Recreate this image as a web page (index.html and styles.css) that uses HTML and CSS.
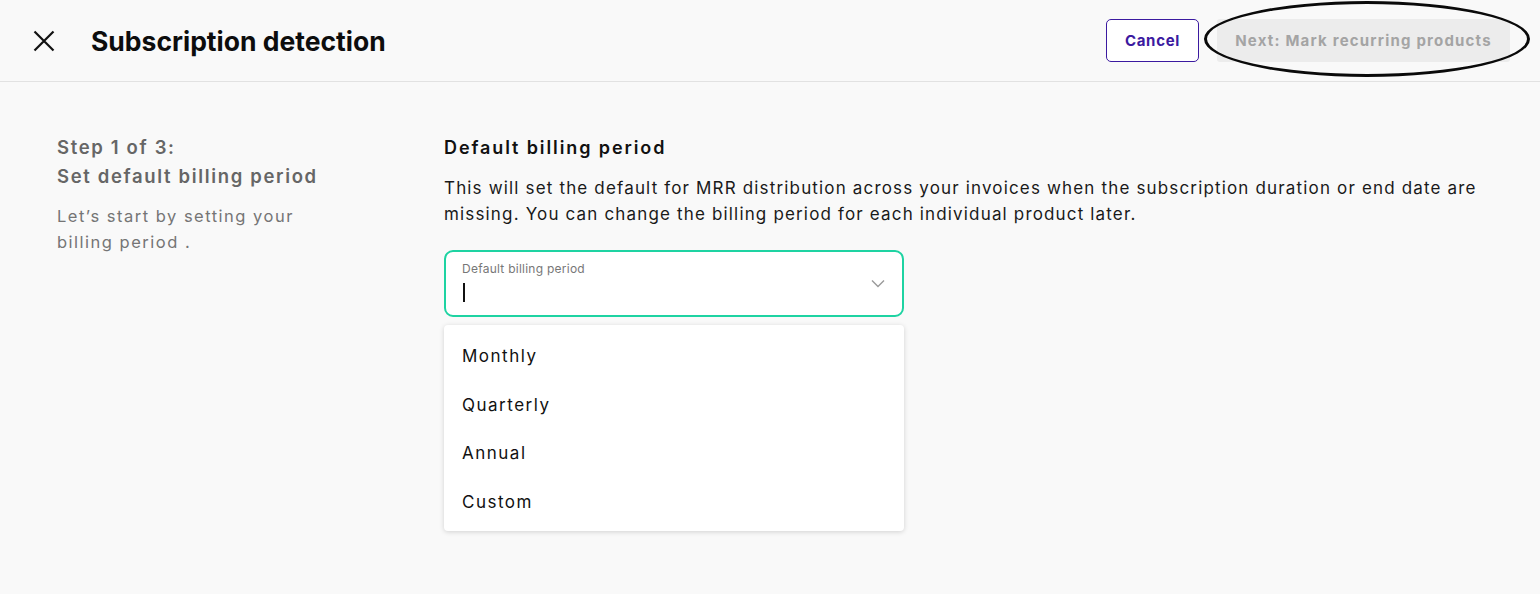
FILE: index.html
```html
<!DOCTYPE html>
<html lang="en">
<head>
<meta charset="utf-8">
<title>Subscription detection</title>
<link rel="stylesheet" href="styles.css">
</head>
<body>
<header class="topbar">
  <button class="close-btn" aria-label="Close">
    <svg width="22" height="22" viewBox="0 0 22 22"><path d="M1.5 1.5 L20.5 20.5 M20.5 1.5 L1.5 20.5" stroke="#111" stroke-width="2.2" fill="none"/></svg>
  </button>
  <h1 class="title">Subscription detection</h1>
  <div class="actions">
    <button class="btn btn-cancel">Cancel</button>
    <div class="next-wrap">
      <button class="btn btn-next" disabled>Next: Mark recurring products</button>
      <span class="annot-ellipse"></span>
    </div>
  </div>
</header>
<main class="content">
  <aside class="steps">
    <div class="step-title">Step 1 of 3:<br>Set default billing period</div>
    <p class="step-desc">Let’s start by setting your billing period .</p>
  </aside>
  <section class="panel">
    <h2 class="panel-title">Default billing period</h2>
    <p class="panel-desc">This will set the default for MRR distribution across your invoices when the subscription duration or end date are missing. You can change the billing period for each individual product later.</p>
    <div class="select">
      <div class="select-label">Default billing period</div>
      <div class="select-value"><span class="caret"></span></div>
      <svg class="chevron" width="14" height="9" viewBox="0 0 14 9"><path d="M1 1.5 L7 7.5 L13 1.5" stroke="#9a9a9a" stroke-width="1.4" fill="none"/></svg>
    </div>
    <ul class="menu">
      <li class="menu-item">Monthly</li>
      <li class="menu-item">Quarterly</li>
      <li class="menu-item">Annual</li>
      <li class="menu-item">Custom</li>
    </ul>
  </section>
</main>
</body>
</html>
```
FILE: styles.css
```css
* { box-sizing: border-box; }
html, body { margin: 0; padding: 0; }
body {
  background: #f9f9f9;
  font-family: "Inter", "Noto Sans", sans-serif;
  color: #111;
  width: 1540px;
  height: 594px;
  overflow: hidden;
}
.topbar {
  height: 82px;
  border-bottom: 1px solid #e2e2e2;
  display: flex;
  align-items: center;
  padding: 0 30px 0 33px;
}
.close-btn {
  border: 0;
  background: none;
  padding: 0;
  width: 22px;
  height: 22px;
  display: flex;
  margin-right: 36px;
}
.title {
  margin: 0;
  font-size: 26.5px;
  font-weight: 700;
  letter-spacing: 0;
  color: #0d0d0d;
}
.actions {
  margin-left: auto;
  display: flex;
  align-items: center;
  gap: 18px;
}
.btn {
  font-family: inherit;
  height: 43px;
  border-radius: 5px;
  font-size: 15px;
  font-weight: 700;
  cursor: pointer;
}
.btn-cancel {
  width: 93px;
  background: #fff;
  border: 1px solid #3b1aa0;
  color: #3b1aa0;
  letter-spacing: 0.7px;
}
.next-wrap { position: relative; }
.btn-next {
  width: 293px;
  background: #ececec;
  border: 0;
  color: #a4a4a4;
  border-radius: 3px;
  letter-spacing: 1.2px;
}
.annot-ellipse {
  position: absolute;
  left: -13px;
  top: -18px;
  width: 326px;
  height: 76px;
  border: 3px solid #0a0a0a;
  border-radius: 50%;
  pointer-events: none;
}
.content {
  display: flex;
  padding: 51px 0 0 57px;
}
.steps {
  width: 387px;
  flex: none;
}
.step-title {
  font-size: 18.5px;
  line-height: 29px;
  font-weight: 600;
  color: #666;
  letter-spacing: 1.65px;
}
.step-desc {
  margin: 12px 0 0;
  font-size: 16.5px;
  line-height: 26px;
  color: #757575;
  letter-spacing: 1.5px;
  width: 250px;
}
.panel { width: 1050px; }
.panel-title {
  margin: 0;
  font-size: 18px;
  line-height: 29px;
  font-weight: 600;
  color: #111;
  letter-spacing: 1.9px;
}
.panel-desc {
  margin: 13px 0 0;
  font-size: 17px;
  line-height: 26px;
  color: #1a1a1a;
  letter-spacing: 1.16px;
}
.select {
  position: relative;
  margin-top: 23px;
  width: 460px;
  height: 67px;
  border: 2px solid #1ed3a2;
  border-radius: 9px;
  background: #fff;
  padding: 10px 16px 0 16px;
}
.select-label {
  font-size: 12px;
  line-height: 14px;
  color: #777;
  letter-spacing: 0.25px;
}
.select-value {
  height: 24px;
  display: flex;
  align-items: center;
  margin-top: 4px;
}
.caret {
  display: block;
  width: 1.5px;
  height: 19px;
  background: #111;
  margin-left: 1px;
}
.chevron {
  position: absolute;
  right: 17px;
  top: 27px;
}
.menu {
  list-style: none;
  margin: 8px 0 0;
  padding: 7px 0 5px;
  width: 460px;
  background: #fff;
  border-radius: 4px;
  box-shadow: 0 1px 5px rgba(0,0,0,0.16);
}
.menu-item {
  height: 48.5px;
  display: flex;
  align-items: center;
  padding-left: 18px;
  font-size: 17px;
  color: #111;
  letter-spacing: 1.5px;
}
```
